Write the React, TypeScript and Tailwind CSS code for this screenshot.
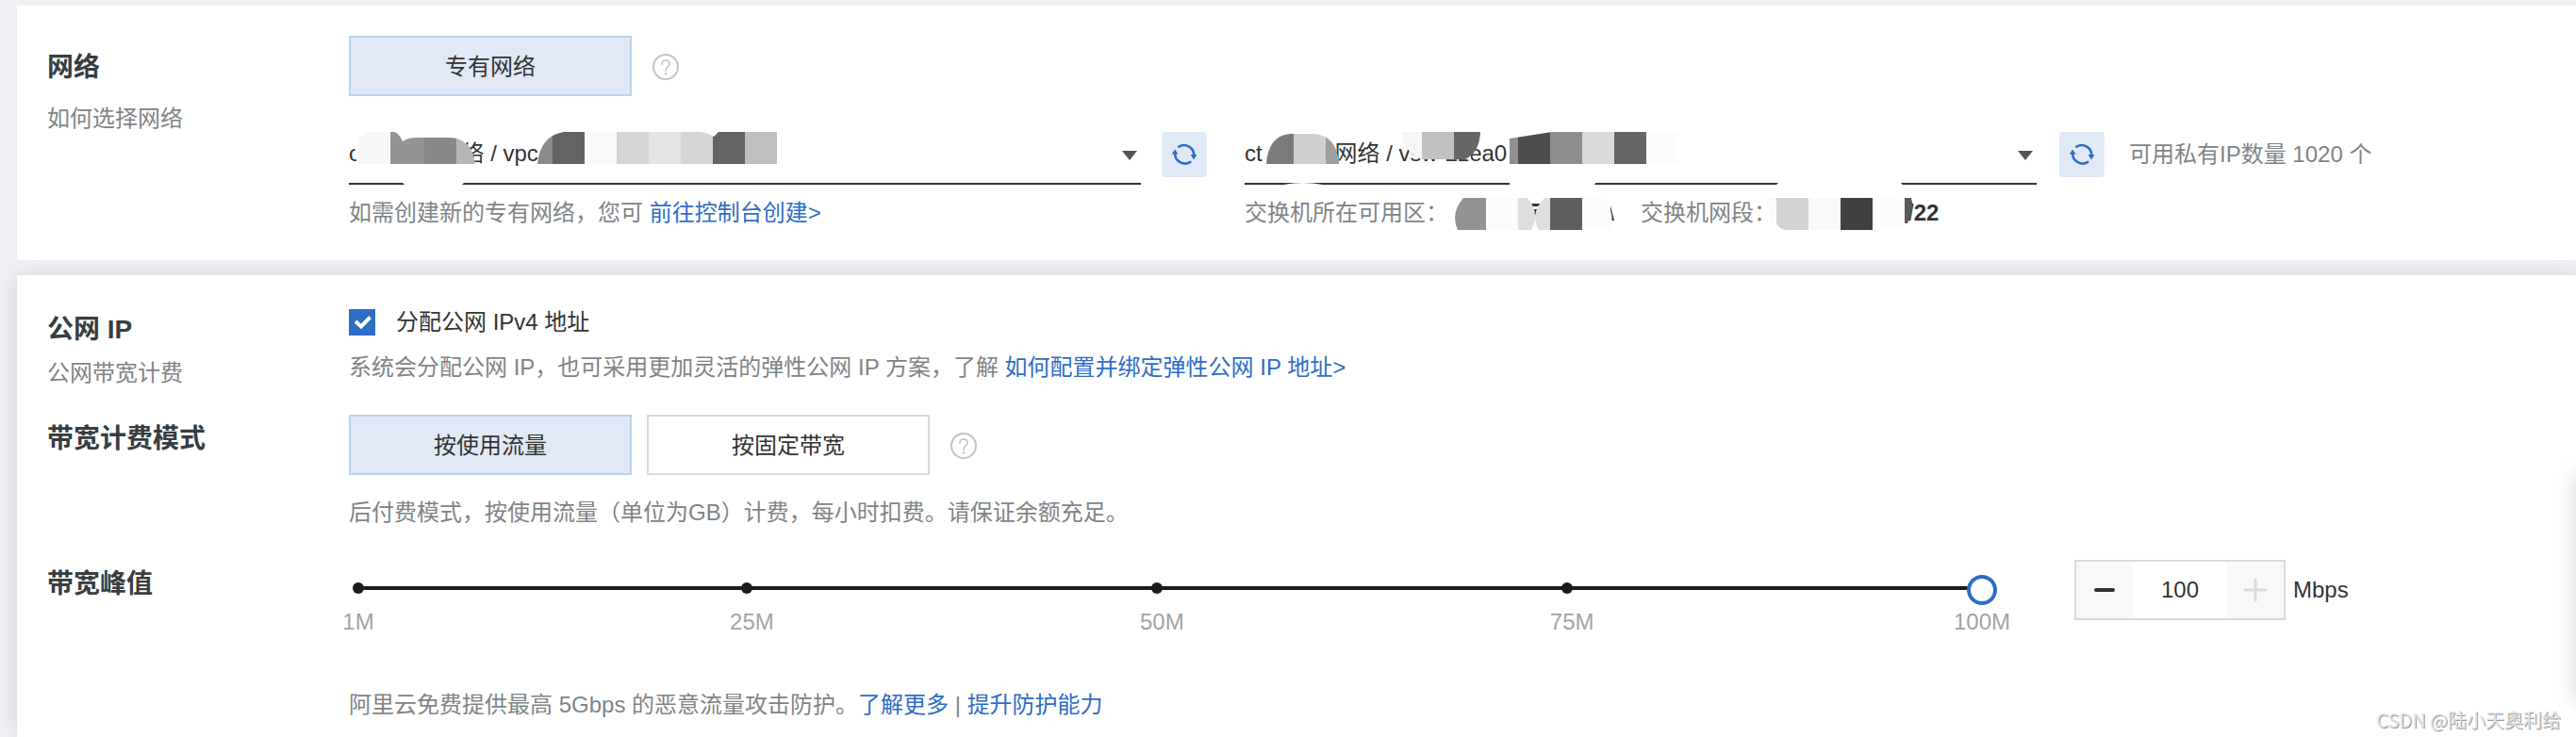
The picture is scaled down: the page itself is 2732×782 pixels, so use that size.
import { useState, type ReactNode } from "react";
import clsx from "clsx";

const marks = [
  { value: 1, label: "1M" },
  { value: 25, label: "25M" },
  { value: 50, label: "50M" },
  { value: 75, label: "75M" },
  { value: 100, label: "100M" },
];

function HelpIcon() {
  return (
    <button type="button" aria-label="帮助" className="mt-[2px] h-7 w-7 shrink-0">
      <svg viewBox="0 0 28 28" className="h-7 w-7" fill="none" stroke="#c4c4c4" strokeWidth="2">
        <circle cx="14" cy="14" r="13" />
        <path d="M10 11.2c0-2.6 1.8-4.2 4.1-4.2s4 1.6 4 3.8c0 3-4 3.3-4 6.7v.7" strokeLinecap="round" strokeWidth="1.6" />
        <circle cx="14.1" cy="21.3" r="1.2" fill="#c4c4c4" stroke="none" />
      </svg>
    </button>
  );
}

function RefreshButton() {
  return (
    <button type="button" aria-label="刷新" className="flex h-12 w-12 shrink-0 items-center justify-center rounded bg-[#e0e9f5]">
      <svg viewBox="0 0 28 28" className="h-7 w-7" fill="none" stroke="#2e6dc6" strokeWidth="2.6" strokeLinecap="round">
        <path d="M8.3 5.7A10.4 10.4 0 0 1 24.2 15" />
        <path d="M20.3 21.8A10.4 10.4 0 0 1 4.2 13" />
        <path d="M20.6 14h6.8L24 19.4zM7.5 13.5H.7L4.1 8.4z" fill="#2e6dc6" stroke="none" />
      </svg>
    </button>
  );
}

function OptionButton({ active, children }: { active?: boolean; children: ReactNode }) {
  return (
    <button
      type="button"
      className={clsx(
        "h-16 w-[300px] border-2 pt-[2px] text-[#333]",
        active ? "border-[#b9d3ef] bg-[#e0e9f5]" : "border-[#d9d9d9] bg-white"
      )}
    >
      {children}
    </button>
  );
}

function Dropdown({ label, value, children }: { label: string; value: string; children?: ReactNode }) {
  return (
    <div className="relative h-16 min-w-0 flex-1">
      <select aria-label={label} className="h-16 w-full appearance-none border-b-2 border-[#333] bg-transparent pr-10 text-[#333] outline-none">
        <option>{value}</option>
      </select>
      <svg viewBox="0 0 16 10" className="pointer-events-none absolute top-7 right-1 h-[10px] w-4">
        <path d="M0 0h16L8 10z" fill="#555" />
      </svg>
      {children}
    </div>
  );
}

// pixelated cover over the VPC id
function VpcMosaic() {
  return (
    <svg width="840" height="64" className="pointer-events-none absolute top-0 left-0">
      <defs>
        <clipPath id="vpc-a">
          <path d="M10 42V20Q12 11 21 8H48Q53 9 57 18Q63 14 72 14H108Q130 15 134 42z" />
        </clipPath>
        <clipPath id="vpc-b">
          <path d="M200 42Q203 12 228 8H373Q381 9 387 13L392 8H454V42z" />
        </clipPath>
      </defs>
      <path d="M7 20H90V42H9Q5 30 7 20z" fill="#fff" />
      <path d="M56 61H123L120 64H59z" fill="#fff" />
      <g clipPath="url(#vpc-a)">
        <rect x="10" y="8" width="34" height="34" fill="#f7f7f7" />
        <rect x="44" y="8" width="36" height="34" fill="#949494" />
        <rect x="80" y="8" width="34" height="34" fill="#888" />
        <rect x="114" y="8" width="20" height="34" fill="#b6b6b6" />
      </g>
      <g clipPath="url(#vpc-b)">
        <rect x="200" y="8" width="16" height="34" fill="#8b8b8b" />
        <rect x="216" y="8" width="34" height="34" fill="#636363" />
        <rect x="250" y="8" width="34" height="34" fill="#f9f9f9" />
        <rect x="284" y="8" width="34" height="34" fill="#d5d5d5" />
        <rect x="318" y="8" width="34" height="34" fill="#e5e5e5" />
        <rect x="352" y="8" width="34" height="34" fill="#d6d6d6" />
        <rect x="386" y="8" width="34" height="34" fill="#636363" />
        <rect x="420" y="8" width="34" height="34" fill="#bfbfbf" />
      </g>
    </svg>
  );
}

// pixelated cover over the switch id
function SwitchMosaic() {
  return (
    <svg width="840" height="64" className="pointer-events-none absolute top-0 left-0">
      <defs>
        <clipPath id="vsw-a">
          <path d="M23 42Q25 12 48 10H74Q98 12 100 42z" />
        </clipPath>
        <clipPath id="vsw-b">
          <path d="M167 8H250Q249 30 234 37H188Q168 30 167 8z" />
        </clipPath>
        <clipPath id="vsw-c">
          <path d="M281 15L326 8H460V42H281z" />
        </clipPath>
      </defs>
      <path d="M174 18H240V37H188Q178 30 174 18z" fill="#fff" />
      <path d="M41 64Q62 60 83 64zM281 61H373L371 64H281zM567 61H695L698 64H564z" fill="#fff" />
      <g clipPath="url(#vsw-a)">
        <rect x="23" y="10" width="29" height="32" fill="#7b7b7b" />
        <rect x="52" y="10" width="34" height="32" fill="#cfcfcf" />
        <rect x="86" y="10" width="14" height="32" fill="#9e9e9e" />
      </g>
      <g clipPath="url(#vsw-b)">
        <rect x="167" y="8" width="21" height="29" fill="#f6f6f6" />
        <rect x="188" y="8" width="34" height="29" fill="#c1c1c1" />
        <rect x="222" y="8" width="28" height="29" fill="#666" />
      </g>
      <g clipPath="url(#vsw-c)">
        <rect x="281" y="8" width="9" height="34" fill="#909090" />
        <rect x="290" y="8" width="34" height="34" fill="#4c4c4c" />
        <rect x="324" y="8" width="34" height="34" fill="#8e8e8e" />
        <rect x="358" y="8" width="34" height="34" fill="#dadada" />
        <rect x="392" y="8" width="34" height="34" fill="#666" />
        <rect x="426" y="8" width="34" height="34" fill="#fcfcfc" />
      </g>
    </svg>
  );
}

function ZoneMosaic() {
  return (
    <svg width="204" height="36" className="shrink-0">
      <defs>
        <clipPath id="zone-a">
          <path d="M16 2H84Q98 18 88 36H10Q2 18 16 2z" />
        </clipPath>
        <clipPath id="zone-b">
          <path d="M102 2H167Q176 18 173 36H96Q86 18 102 2z" />
        </clipPath>
      </defs>
      <path d="M86 8h12v3H86zM88 14h8v2h-8zM90 16h3v4h-3z" fill="#333" />
      <path d="M172 10l4 16h-4z" fill="#333" />
      <g clipPath="url(#zone-a)">
        <rect x="0" y="2" width="40" height="34" fill="#929292" />
        <rect x="40" y="2" width="34" height="34" fill="#fbfbfb" />
        <rect x="74" y="2" width="20" height="34" fill="#dedede" />
      </g>
      <g clipPath="url(#zone-b)">
        <rect x="90" y="2" width="18" height="34" fill="#dedede" />
        <rect x="108" y="2" width="34" height="34" fill="#5e5e5e" />
        <rect x="142" y="2" width="34" height="34" fill="#fcfcfc" />
      </g>
    </svg>
  );
}

function CidrMosaic() {
  return (
    <svg width="151" height="36" className="relative -ml-3 shrink-0 overflow-visible">
      <path d="M1 2H12V32Q3 26 1 2z" fill="#fafafa" />
      <path d="M12 2H46V36H24Q15 36 12 29z" fill="#d3d3d3" />
      <rect x="46" y="2" width="34" height="34" fill="#f9f9f9" />
      <rect x="80" y="2" width="34" height="34" fill="#404040" />
      <path d="M114 2H148V24Q146 36 134 36H114z" fill="#fcfcfc" />
      <path d="M148 2H155Q158 12 154 22L151 29H148z" fill="#5a5a5a" />
    </svg>
  );
}

function NetworkSection() {
  return (
    <section className="flex bg-white pt-8 pb-8 pl-8">
      <div className="w-80 shrink-0 pt-[14px]">
        <h2 className="text-[28px] leading-10 font-bold text-[#373d41]">网络</h2>
        <p className="mt-4">如何选择网络</p>
      </div>
      <div className="min-w-0 flex-1">
        <div className="flex items-center gap-[22px]">
          <OptionButton active>专有网络</OptionButton>
          <HelpIcon />
        </div>
        <div className="mt-[30px] flex gap-10">
          <div className="w-[910px]">
            <div className="flex items-center gap-[22px]">
              <Dropdown label="专有网络" value={"ct　　　\u2009网络 / vpc"}>
                <VpcMosaic />
              </Dropdown>
              <RefreshButton />
            </div>
            <p className="mt-3">
              如需创建新的专有网络，您可 <a href="#vpc" className="text-[#2e6dc6]">前往控制台创建&gt;</a>
            </p>
          </div>
          <div>
            <div className="flex items-center">
              <div className="flex w-[912px] items-center gap-6">
                <Dropdown label="交换机" value={"ct　　　\u2009网络 / vsw-2zea0"}>
                  <SwitchMosaic />
                </Dropdown>
                <RefreshButton />
              </div>
              <span className="ml-[26px] whitespace-nowrap">可用私有IP数量 1020 个</span>
            </div>
            <div className="mt-3 flex whitespace-nowrap">
              <span>交换机所在可用区：</span>
              <ZoneMosaic />
              <span>交换机网段：</span>
              <CidrMosaic />
              <span className="font-bold text-[#333]">/22</span>
            </div>
          </div>
        </div>
      </div>
    </section>
  );
}

function BandwidthSlider({ value, onChange }: { value: number; onChange: (v: number) => void }) {
  return (
    <div className="-ml-[6px] max-w-[1754px] min-w-0 flex-1">
      <div className="relative h-16">
        <div className="absolute top-7 right-4 left-4 h-1 bg-[#1a1b1a]" />
        <div className="absolute top-6 right-[21px] left-[11px] h-3">
          {marks.slice(1, 4).map((m) => (
            <span
              key={m.value}
              className="absolute top-0 h-3 w-3 -translate-x-1/2 rounded-full bg-[#1a1b1a]"
              style={{ left: `${((m.value - 1) / 99) * 100}%` }}
            />
          ))}
        </div>
        <span className="absolute top-6 left-[10px] h-3 w-3 rounded-full bg-[#1a1b1a]" />
        <input
          type="range"
          aria-label="带宽峰值"
          min={1}
          max={100}
          value={value}
          onChange={(e) => onChange(Number(e.target.value))}
          className="absolute inset-0 h-16 w-full appearance-none bg-transparent [&::-webkit-slider-thumb]:h-8 [&::-webkit-slider-thumb]:w-8 [&::-webkit-slider-thumb]:appearance-none [&::-webkit-slider-thumb]:rounded-full [&::-webkit-slider-thumb]:border-4 [&::-webkit-slider-thumb]:border-solid [&::-webkit-slider-thumb]:border-[#2e6dc6] [&::-webkit-slider-thumb]:bg-white"
        />
      </div>
      <div className="relative mx-4 -mt-4 h-9 text-[#a3a3a3]">
        {marks.map((m) => (
          <span key={m.value} className="absolute top-0 -translate-x-1/2" style={{ left: `${((m.value - 1) / 99) * 100}%` }}>
            {m.label}
          </span>
        ))}
      </div>
    </div>
  );
}

function PublicIpSection() {
  const [bandwidth, setBandwidth] = useState(100);
  const [assign, setAssign] = useState(true);

  return (
    <section className="mt-4 flex-1 bg-white pt-8 pb-4 pl-8 shadow-[0_0_20px_rgba(0,0,0,0.12)]">
      <div className="flex">
        <div className="w-80 shrink-0 pt-[6px]">
          <h2 className="text-[28px] leading-10 font-bold text-[#373d41]">公网 IP</h2>
          <p className="mt-2">公网带宽计费</p>
        </div>
        <div>
          <label className="flex items-center gap-[22px] text-[#333]">
            <span className="relative h-7 w-7">
              <input
                type="checkbox"
                checked={assign}
                onChange={(e) => setAssign(e.target.checked)}
                className="block h-7 w-7 appearance-none border-2 border-[#2e6dc6] checked:bg-[#2e6dc6]"
              />
              <svg viewBox="0 0 28 28" className="pointer-events-none absolute inset-0" fill="none" stroke="#fff" strokeWidth="4">
                <path d="M7 13l6 5.5L22.500 8.500" />
              </svg>
            </span>
            分配公网 IPv4 地址
          </label>
          <p className="mt-3">
            系统会分配公网 IP，也可采用更加灵活的弹性公网 IP 方案，了解{" "}
            <a href="#eip" className="text-[#2e6dc6]">如何配置并绑定弹性公网 IP 地址&gt;</a>
          </p>
        </div>
      </div>

      <div className="mt-[26px] flex">
        <div className="w-80 shrink-0 pt-[6px]">
          <h2 className="text-[28px] leading-10 font-bold text-[#373d41]">带宽计费模式</h2>
        </div>
        <div>
          <div className="flex items-center gap-[22px]">
            <div className="flex gap-4">
              <OptionButton active>按使用流量</OptionButton>
              <OptionButton>按固定带宽</OptionButton>
            </div>
            <HelpIcon />
          </div>
          <p className="mt-[22px]">后付费模式，按使用流量（单位为GB）计费，每小时扣费。请保证余额充足。</p>
        </div>
      </div>

      <div className="mt-8 flex">
        <div className="w-80 shrink-0 pt-[6px]">
          <h2 className="text-[28px] leading-10 font-bold text-[#373d41]">带宽峰值</h2>
        </div>
        <div className="min-w-0 flex-1">
          <div className="flex items-start">
            <BandwidthSlider value={bandwidth} onChange={setBandwidth} />
            <div className="mr-10 ml-[82px] flex items-center gap-2 text-[#333]">
              <div className="flex h-16 w-56 border-2 border-[#d9d9d9]">
                <button
                  type="button"
                  aria-label="减少"
                  onClick={() => setBandwidth(Math.max(1, bandwidth - 1))}
                  className="flex w-[60px] items-center justify-center bg-[#f7f8fa]"
                >
                  <svg width="26" height="26" stroke="#333" strokeWidth="4" strokeLinecap="round">
                    <path d="M4 13h18" />
                  </svg>
                </button>
                <input
                  type="text"
                  aria-label="带宽"
                  value={bandwidth}
                  onChange={(e) => setBandwidth(Number(e.target.value) || 1)}
                  className="w-[100px] min-w-0 text-center outline-none"
                />
                <button
                  type="button"
                  aria-label="增加"
                  onClick={() => setBandwidth(Math.min(100, bandwidth + 1))}
                  className="flex w-[60px] items-center justify-center bg-[#f7f8fa]"
                >
                  <svg width="26" height="26" stroke="#d9d9d9" strokeWidth="3" strokeLinecap="round">
                    <path d="M2 13h22M13 2v22" />
                  </svg>
                </button>
              </div>
              <span>Mbps</span>
            </div>
          </div>
          <p className="mt-[52px]">
            阿里云免费提供最高 5Gbps 的恶意流量攻击防护。<a href="#more" className="text-[#2e6dc6]">了解更多</a> |{" "}
            <a href="#protect" className="text-[#2e6dc6]">提升防护能力</a>
          </p>
        </div>
      </div>
    </section>
  );
}

export default function App() {
  return (
    <main className="relative flex min-h-screen flex-col overflow-hidden bg-[#eff0f4] pt-[6px] pl-[18px] font-['Liberation_Sans','Noto_Sans_CJK_SC',sans-serif] text-2xl leading-9 text-[#7f8486]">
      <NetworkSection />
      <PublicIpSection />
      {/* side panel tucked past the right edge, only its shadow shows */}
      <div className="pointer-events-none absolute top-[504px] -right-10 h-60 w-10 shadow-[0_0_24px_rgba(0,0,0,0.18)]" />
      <span className="absolute right-4 bottom-0 font-['Noto_Sans_CJK_SC',sans-serif] text-xl leading-9 text-[#e4e4e4] [text-shadow:1px_1px_0_#999]">
        CSDN @陆小天奥利给
      </span>
    </main>
  );
}
